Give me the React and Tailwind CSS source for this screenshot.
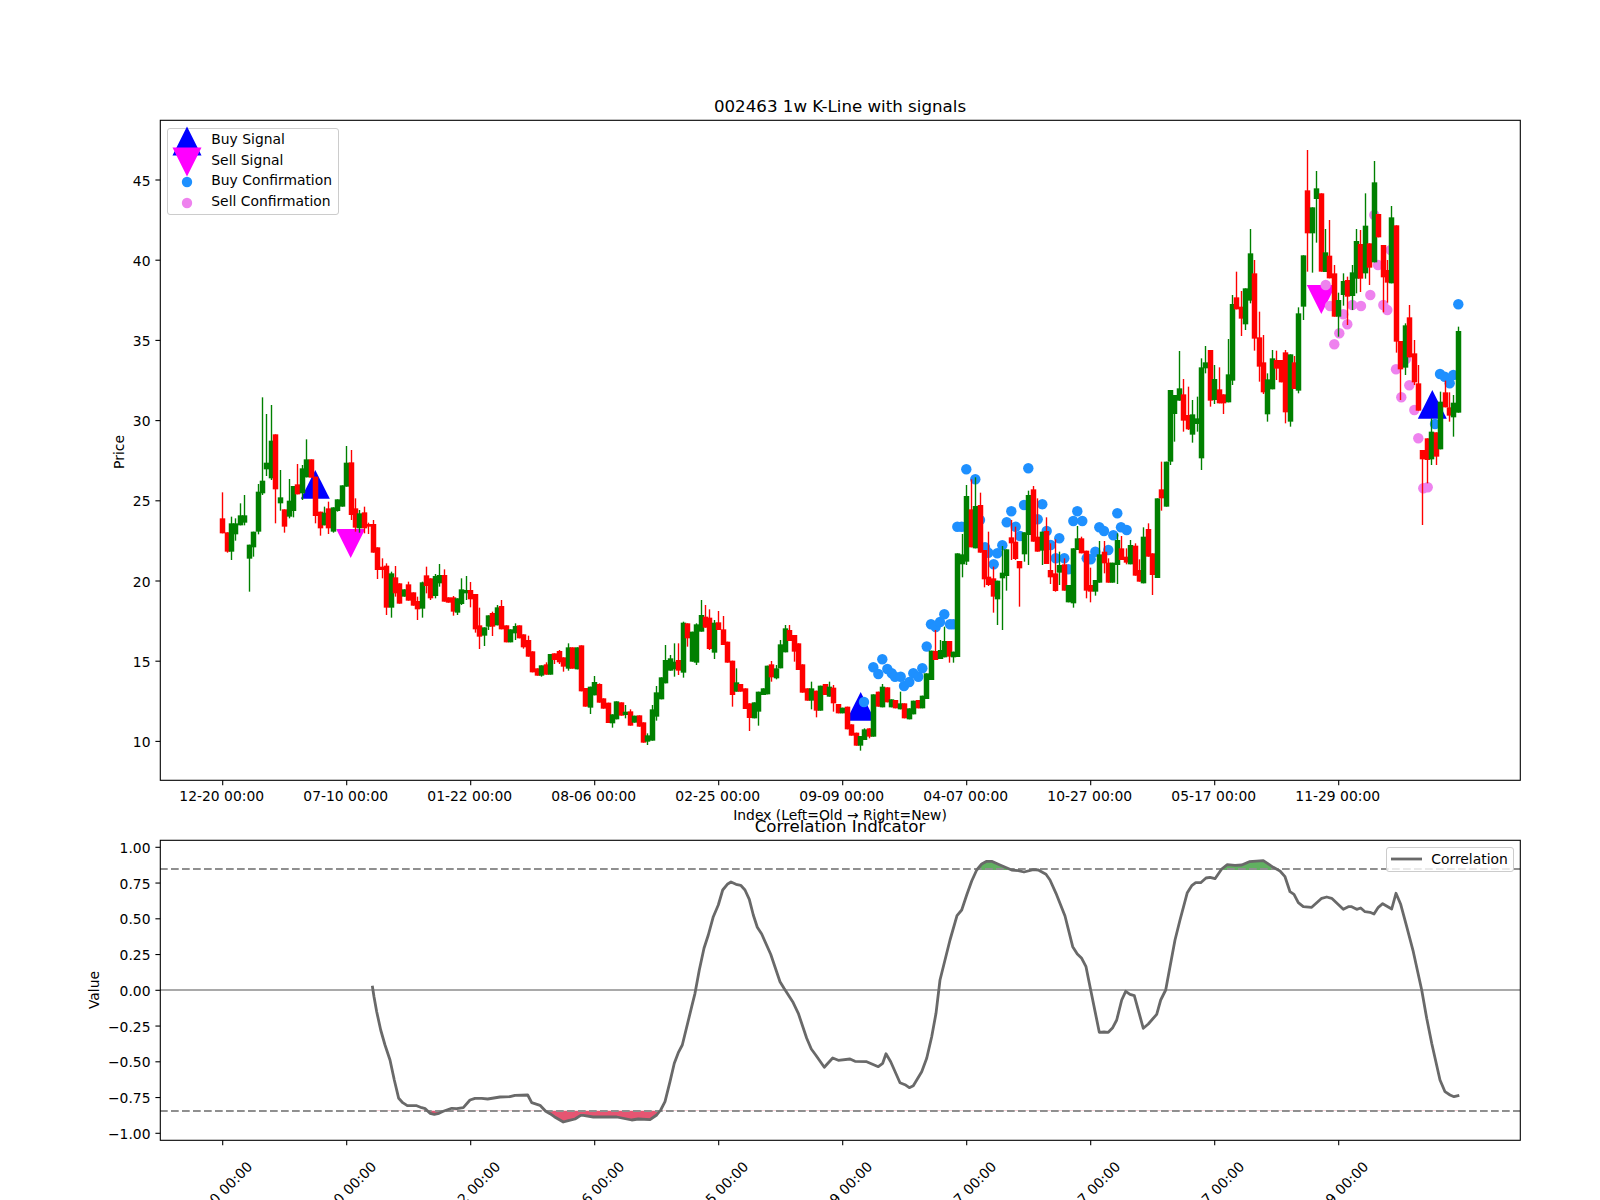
const X_LABELS = ['12-20 00:00', '07-10 00:00', '01-22 00:00', '08-06 00:00', '02-25 00:00', '09-09 00:00', '04-07 00:00', '10-27 00:00', '05-17 00:00', '11-29 00:00']
const tickX = (k) => 222.7 + 124 * k
const candleX = (i) => Math.round(222.2 + 4.429 * i) + 0.5

// [isRed, wickTop, bodyTop, bodyBottom, wickBottom], y in thirds of a pixel from base
const CANDLE_GROUPS = [
  {
    base: 380,
    rows: [
      [1,337,415,460,460],[1,457,457,515,518],[0,410,430,515,540],[0,415,430,463,482],[0,370,406,436,436],[0,345,406,428,436],[0,494,494,536,635],[0,455,455,502,530],
      [0,312,335,455,463],[0,52,302,340,345],[0,102,248,268,288],[0,75,182,295,300],[1,163,163,328,430],[0,270,352,370,392],[1,388,388,440,458],[0,297,362,410,415],
      [0,318,318,393,412],[1,252,313,343,343],[0,255,265,340,360],[0,178,238,292,292],[1,238,238,293,293],[1,290,290,408,430],[1,395,395,445,467],[0,380,398,436,436],
      [1,365,385,445,462],[0,382,382,455,458],[0,358,358,393,395],[0,316,316,380,380],[0,198,248,320,320],[1,210,247,405,420],[1,355,385,443,455],[0,390,400,445,458],
      [1,380,397,445,460],[1,428,432,440,462],[1,420,432,518,518],[1,502,502,570,597],[1,535,560,570,595],[1,550,557,683,705],[0,575,580,683,713],[1,558,592,640,650],
      [1,610,610,671,671],[0,628,628,650,650],[1,605,613,662,662],[1,637,637,677,677],[1,650,663,688,720],[0,605,607,686,713],[1,560,586,618,640],
    ],
  },
  {
    base: 570,
    rows: [
      [1,25,25,85,90],[0,12,18,78,85],[0,-18,15,40,50],[1,-2,15,95,95],[1,82,82,98,98],[1,78,82,125,137],[0,85,85,128,135],[0,25,58,102,105],[0,18,60,70,90],
      [1,36,60,88,112],[1,72,72,178,188],[1,113,166,200,237],[0,172,172,197,228],[0,136,136,170,180],[1,125,129,170,198],[0,105,112,166,166],[1,90,108,178,178],
      [1,166,166,217,217],[0,178,178,217,217],[0,160,168,190,210],[1,166,166,205,205],[1,193,193,232,236],[1,197,210,260,260],[1,244,244,307,307],[1,295,295,317,317],
      [0,286,286,317,320],[1,277,283,314,314],[0,252,252,314,314],[1,250,250,270,282],[1,240,243,277,282],[1,262,262,290,305],[0,220,232,296,302],[1,232,232,296,296],
      [0,232,232,298,298],[1,226,226,364,364],[1,354,354,410,410],[0,350,350,413,432],[0,318,336,376,376],[1,340,342,398,398],[1,385,385,416,416],[1,398,398,459,459],
      [0,433,433,460,473],[0,394,394,448,448],[1,397,397,437,437],[0,405,425,435,445],[1,418,424,467,467],[0,437,437,458,458],[1,436,436,470,470],[1,457,457,518,518],
      [0,490,496,515,525],[0,405,418,512,512],[0,348,367,440,452],[0,322,322,388,388],[0,225,270,340,340],
    ],
  },
  {
    base: 580,
    rows: [
      [0,225,235,272,272],[0,190,245,268,290],[1,190,240,272,285],[0,125,128,278,293],[1,130,130,175,200],[0,155,155,245,245],[0,130,133,248,255],[0,60,105,155,155],
      [1,75,110,143,143],[1,88,113,207,210],[0,120,128,218,237],[1,93,127,150,150],[1,108,148,195,195],[1,185,185,248,248],[1,242,242,345,380],[0,265,307,335,335],
      [1,312,312,335,335],[1,325,325,387,387],[1,370,370,414,453],[0,367,367,415,415],[0,335,335,395,437],[0,325,325,345,345],[0,257,257,343,343],[1,243,253,292,305],
      [0,255,265,295,298],[0,180,193,265,265],[0,135,145,217,217],[1,135,150,183,183],[1,165,165,215,245],[1,190,190,270,270],[1,253,253,338,338],[1,325,325,362,362],
      [0,305,325,362,388],[1,332,332,392,412],[0,317,317,392,392],[1,312,312,345,345],[0,305,320,350,350],[1,315,323,370,395],[1,372,372,400,400],[0,383,383,400,400],
      [1,380,380,448,448],[1,433,433,467,467],[1,458,458,497,497],[0,468,468,497,512],[0,445,448,480,480],[1,445,445,470,475],[0,343,343,470,470],[1,335,335,380,380],
      [0,312,320,382,382],[1,322,322,367,367],[0,358,358,382,382],[1,360,360,385,385],[0,335,370,388,388],[1,370,370,415,415],[0,385,385,418,418],[0,362,362,403,403],
      [1,360,360,385,385],[0,347,347,385,385],[0,280,280,357,357],[0,212,212,300,300],[1,150,213,240,240],[0,180,210,237,237],[0,140,183,232,232],[1,183,183,230,248],
      [0,215,215,232,248],
    ],
  },
  {
    base: 430,
    rows: [
      [0,370,370,681,681],[0,312,373,403,442],[0,165,198,395,405],[1,148,238,352,352],[0,142,228,355,355],[1,188,225,368,368],[1,360,360,448,472],[1,305,440,465,468],
      [1,410,445,500,548],[0,452,452,508,585],[0,348,428,445,600],[0,358,358,438,482],[1,270,322,340,390],[1,290,335,387,390],[1,393,393,415,530],[0,307,307,373,395],
      [0,182,195,315,405],[1,168,178,335,335],[1,205,320,365,365],[0,305,305,362,405],[1,262,303,402,402],[1,340,420,442,462],[1,328,430,483,485],[0,365,405,428,465],
      [1,385,403,482,482],[0,465,465,517,517],[0,355,355,520,533],[0,288,325,360,360],[1,320,325,370,370],[1,362,362,482,505],[1,413,465,485,517],[0,450,450,485,497],
      [0,333,373,458,458],[1,333,365,400,430],[1,385,398,458,458],[0,398,398,458,458],[0,310,330,405,462],[1,318,355,390,390],[1,355,380,398,403],[0,330,345,403,403],
      [1,340,347,437,437],[1,388,420,455,455],[0,292,320,460,460],[1,280,297,380,380],[1,370,370,435,495],
    ],
  },
  {
    base: 140,
    rows: [
      [0,1075,1075,1314,1314],[1,965,1048,1075,1112],[0,965,965,1100,1100],[0,750,750,965,975],[0,765,765,822,905],[0,633,745,782,782],[1,717,763,842,875],[1,740,825,868,870],
      [0,780,823,884,908],[0,770,835,852,875],[0,655,682,955,990],[0,618,667,685,700],[1,630,630,782,800],[0,675,717,780,792],[1,682,748,790,790],[1,763,763,790,822],
      [0,597,703,787,787],[0,465,492,722,735],[1,395,472,508,508],[1,453,500,536,588],[0,445,445,553,570],[0,267,340,482,490],[1,360,400,596,632],[1,515,592,680,725],
      [1,585,667,757,762],[0,700,718,823,845],[0,630,655,748,748],[1,632,660,686,720],[1,660,660,727,727],[1,630,637,817,850],[0,643,643,845,860],[1,648,667,747,747],
      [0,502,520,752,760],[0,346,346,500,540],[1,30,151,280,395],[0,202,202,280,398],[0,93,145,177,308],[1,160,160,395,395],[0,267,337,396,396],[1,240,347,415,415],
      [1,375,400,530,530],[0,458,480,530,590],[0,400,423,465,497],[1,410,420,470,555],[0,375,397,468,510],[0,267,303,416,460],[1,270,312,416,456],[0,160,257,400,416],
      [1,310,310,383,435],[0,63,127,367,367],[1,222,222,292,292],[1,315,315,412,517],[1,360,390,428,488],[0,198,232,430,430],[1,256,256,605,638],[1,603,603,688,780],
      [0,550,556,683,705],[1,495,532,652,652],[1,600,640,727,735],[1,675,730,812,812],[1,930,930,958,1155],[1,895,895,960,1030],[0,835,875,958,975],[1,877,877,950,975],
      [0,755,785,928,928],[1,722,757,802,802],[1,757,802,827,845],[0,765,788,832,890],[0,560,573,818,818],
    ],
  },
]

const CANDLES = CANDLE_GROUPS.flatMap(({ base, rows }) =>
  rows.map(([red, wt, bt, bb, wb]) => ({
    color: red ? '#ff0000' : '#008000',
    wickTop: base + wt / 3,
    bodyTop: base + bt / 3,
    bodyBottom: base + bb / 3,
    wickBottom: base + wb / 3,
  }))
)

const BUY_DOTS = [
  [864,702],[873.3,667.3],[878.3,674],[882.3,659.3],[887.3,669],[891.7,673.3],[895,676.7],[900.7,676.7],[904,686],[909.3,682],[913.3,673.3],[918.3,676.7],[922.3,668.3],
  [926.7,646.5],[931,624.3],[935.7,627],[940,622],[944.3,614.3],[950,624.2],[953.3,624.2],[957.3,526.7],[961.7,526.7],[966.3,469.3],[975.3,479.3],[980,520],[985,547.3],
  [988.3,552.7],[993.7,564.3],[997.3,553.3],[1002.3,545.3],[1006.7,522.3],[1011.3,511.3],[1015.7,526.7],[1020,536],[1024,505],[1028.3,468.3],[1037.7,519.3],[1042.3,504.3],
  [1046.7,531],[1050.7,545],[1055.7,558.3],[1059.3,538.3],[1064.3,558.3],[1068.3,569.3],[1073.3,521],[1077.3,511.3],[1082.3,521],[1086.7,558.3],[1090.7,559.3],[1095.3,551.7],
  [1099.3,527.3],[1104,531],[1108.3,550],[1113.3,535.3],[1117.3,513.3],[1121,527.3],[1126.7,530],[1435,424],[1440,374],[1444.7,376.7],[1449.7,383.3],[1453.3,375],[1458.3,304.3],
]

const SELL_DOTS = [
  [1325.7,285],[1330,306],[1334.3,344.3],[1339.3,333.3],[1343.3,314.3],[1347.3,324.3],[1352.3,305],[1361,306],[1370.3,295],[1374.3,215],[1378,265],[1383.3,305],[1387.3,310],
  [1390.7,250],[1396,369.3],[1401.3,397.3],[1406,359],[1409.3,385.3],[1414.3,410],[1418.3,438.3],[1423.3,488.3],[1427.7,487.3],
]

const BUY_MARKERS = [[315.3, 470], [860.7, 692], [1432.3, 390]]
const SELL_MARKERS = [[350.7, 558], [1321.3, 314]]

// correlation curve read from three crops: [originX, points in thirds of a pixel]
const CURVE_PARTS = [
  [150, [[667,647],[672,680],[680,725],[692,780],[705,825],[720,870],[733,930],[746,985],[758,998],[772,1007],[800,1007],[815,1013],[826,1016],[840,1030],[853,1033],[867,1030],[880,1024],[905,1015],[920,1016],[940,1013],[960,990],[975,985],[995,985],[1013,987],[1050,981],[1080,980],[1095,976],[1133,975],[1145,998],[1170,1006],[1187,1024],[1200,1031],[1213,1040],[1240,1056],[1255,1052],[1275,1047],[1292,1036],[1300,1036],[1330,1041],[1400,1041],[1445,1050],[1465,1047]]],
  [650, [[0,1049],[20,1035],[32,1020],[45,995],[60,935],[73,880],[85,848],[97,825],[125,710],[135,670],[148,600],[162,535],[175,495],[190,440],[205,405],[218,360],[232,343],[243,336],[258,343],[272,346],[285,360],[298,388],[310,435],[322,472],[335,492],[362,553],[390,635],[402,655],[428,695],[445,730],[470,805],[484,837],[497,855],[523,892],[548,864],[565,871],[600,867],[615,874],[650,875],[685,890],[698,880],[708,851],[722,875],[750,938],[765,944],[778,953],[790,947],[815,905],[830,865],[845,800],[858,730],[870,630],[885,570],[900,510],[921,437],[935,420],[950,375],[965,333],[980,300],[995,282],[1010,274],[1025,274],[1050,285],[1085,300],[1105,302],[1122,306],[1150,299],[1165,300],[1188,313],[1200,330],[1218,370],[1245,438],[1268,530],[1282,552],[1295,565],[1308,590],[1322,660],[1348,787],[1362,786],[1375,787],[1388,773],[1400,750],[1415,690],[1427,664],[1440,673],[1453,677]]],
  [1130, [[40,775],[55,762],[80,733],[92,690],[107,660],[120,590],[135,510],[150,450],[172,368],[185,347],[197,338],[212,338],[228,324],[240,322],[255,326],[275,297],[292,284],[315,286],[335,285],[358,275],[400,272],[430,292],[450,303],[465,320],[480,365],[492,373],[505,398],[520,410],[545,412],[575,385],[590,381],[605,385],[640,418],[655,410],[665,410],[680,418],[692,414],[705,425],[720,427],[732,432],[745,412],[758,401],[785,417],[798,370],[812,403],[830,470],[850,545],[875,660],[890,745],[905,820],[930,930],[945,965],[960,975],[972,980],[988,976]]],
]
const CURVE = CURVE_PARTS.flatMap(([x0, pts]) => pts.map(([x, y]) => `${(x0 + x / 3).toFixed(1)},${(770 + y / 3).toFixed(1)}`))
const CURVE_LINE = CURVE.join(' ')
const CURVE_END = CURVE_PARTS[2][1].at(-1)
const CURVE_START = CURVE_PARTS[0][1][0]
const startX = (150 + CURVE_START[0] / 3).toFixed(1)
const endX = (1130 + CURVE_END[0] / 3).toFixed(1)

const UP = 870
const LOW = 1110.5

const Spine = ({ top, height }) => (
  <rect x="160.3" y={top + 0.3} width="1360" height={height} fill="none" stroke="#000" strokeWidth="1.1" />
)

const XTicks = ({ y }) =>
  X_LABELS.map((_, k) => <line key={k} x1={tickX(k)} x2={tickX(k)} y1={y} y2={y + 4.9} stroke="#000" strokeWidth="1.1" />)

const YTick = ({ y, label }) => (
  <g>
    <line x1="155.4" x2="160.3" y1={y} y2={y} stroke="#000" strokeWidth="1.1" />
    <text x="150.5" y={y + 5.5} textAnchor="end" className="text-[13.89px]">{label}</text>
  </g>
)

const KLineChart = () => (
  <svg viewBox="160 120 1360 660" className="block h-[660px] w-[1360px] overflow-visible">
    {BUY_MARKERS.map(([x, y]) => (
      <polygon key={x} points={`${x},${y} ${x - 14.5},${y + 28.7} ${x + 14.5},${y + 28.7}`} fill="#0000ff" />
    ))}
    {SELL_MARKERS.map(([x, y]) => (
      <polygon key={x} points={`${x},${y} ${x - 14.5},${y - 29} ${x + 14.5},${y - 29}`} fill="#ff00ff" />
    ))}
    {BUY_DOTS.map(([x, y]) => <circle key={x} cx={x} cy={y} r="5.2" fill="#1e90ff" />)}
    {SELL_DOTS.map(([x, y]) => <circle key={x} cx={x} cy={y} r="5.2" fill="#ee82ee" />)}
    {CANDLES.map((c, i) => (
      <g key={i} stroke={c.color}>
        <line x1={candleX(i)} x2={candleX(i)} y1={c.wickTop} y2={c.wickBottom} strokeWidth="1.39" />
        <line x1={candleX(i)} x2={candleX(i)} y1={c.bodyTop} y2={c.bodyBottom} strokeWidth="5.5" />
      </g>
    ))}
    <Spine top={120} height={660} />
    <XTicks y={780.3} />
    {X_LABELS.map((label, k) => (
      <text key={label} x={tickX(k) - 1} y="801" textAnchor="middle" className="text-[13.89px]">{label}</text>
    ))}
    {[45, 40, 35, 30, 25, 20, 15, 10].map((v) => (
      <YTick key={v} y={180 + (45 - v) * 16.04} label={v} />
    ))}
    <text transform="translate(124 452) rotate(-90)" textAnchor="middle" className="text-[13.89px]">Price</text>
    <text x="840" y="820" textAnchor="middle" className="text-[13.89px]">Index (Left=Old → Right=New)</text>
  </svg>
)

const CorrelationChart = () => (
  <svg viewBox="160 840 1360 300" className="block h-[300px] w-[1360px] overflow-visible">
    <defs>
      <clipPath id="aboveUpper"><rect x="160" y="840" width="1360" height={UP - 840} /></clipPath>
      <clipPath id="belowLower"><rect x="160" y={LOW} width="1360" height={1140 - LOW} /></clipPath>
    </defs>
    <polygon points={`${startX},${UP} ${CURVE_LINE} ${endX},${UP}`} fill="#008000" fillOpacity="0.62" clipPath="url(#aboveUpper)" />
    <polygon points={`${startX},${LOW} ${CURVE_LINE} ${endX},${LOW}`} fill="#dc143c" fillOpacity="0.72" clipPath="url(#belowLower)" />
    <line x1="160" x2="1520" y1="869" y2="869" stroke="#8f8f8f" strokeWidth="2" strokeDasharray="7.7 3.3" />
    <line x1="160" x2="1520" y1="1111" y2="1111" stroke="#8f8f8f" strokeWidth="2" strokeDasharray="7.7 3.3" />
    <line x1="160" x2="1520" y1="990" y2="990" stroke="#a9a9a9" strokeWidth="2" />
    <polyline points={CURVE_LINE} fill="none" stroke="#696969" strokeWidth="2.8" strokeLinejoin="round" />
    <Spine top={840} height={300} />
    <XTicks y={1140.3} />
    {X_LABELS.map((label, k) => (
      <text key={label} transform={`translate(${tickX(k) - 3} 1194) rotate(-45)`} y="5" textAnchor="middle" className="text-[13.89px]">{label}</text>
    ))}
    {['1.00', '0.75', '0.50', '0.25', '0.00', '−0.25', '−0.50', '−0.75', '−1.00'].map((label, k) => (
      <YTick key={label} y={847.3 + k * 35.75} label={label} />
    ))}
    <text transform="translate(99 990) rotate(-90)" textAnchor="middle" className="text-[13.89px]">Value</text>
  </svg>
)

const LegendRow = ({ label, children }) => (
  <div className="relative flex h-[21px] items-center pl-[43px]">
    <svg viewBox="-15 -15 30 30" className="absolute left-[3.4px] top-[-2.5px] h-[30px] w-[30px] overflow-visible">
      {children}
    </svg>
    <span className="relative">{label}</span>
  </div>
)

const SignalLegend = () => (
  <div className="absolute left-[7.3px] top-[7.7px] flex h-[87.6px] w-[171.4px] flex-col justify-center rounded-[3px] border border-[#cccccc] bg-white/80 pb-[3px] text-[13.89px] leading-[16px]">
    <LegendRow label="Buy Signal"><polygon points="0,-14.5 -14.5,14.5 14.5,14.5" fill="#0000ff" /></LegendRow>
    <LegendRow label="Sell Signal"><polygon points="0,14.5 -14.5,-14.5 14.5,-14.5" fill="#ff00ff" /></LegendRow>
    <LegendRow label="Buy Confirmation"><circle r="5.2" fill="#1e90ff" /></LegendRow>
    <LegendRow label="Sell Confirmation"><circle r="5.2" fill="#ee82ee" /></LegendRow>
  </div>
)

const CorrelationLegend = () => (
  <div className="absolute left-[1226.3px] top-[7.3px] flex h-[25px] w-[127.4px] items-center gap-[9px] rounded-[3px] border border-[#cccccc] bg-white/80 pb-[2px] pl-[4px] text-[13.89px] leading-[16px]">
    <svg viewBox="0 0 31 4" className="h-[4px] w-[31px]">
      <line x1="0" x2="31" y1="2" y2="2" stroke="#696969" strokeWidth="2.8" />
    </svg>
    <span>Correlation</span>
  </div>
)

export default function App() {
  return (
    <div className="h-[1200px] w-[1600px] overflow-hidden bg-white pl-[160px] pt-[97px] font-['DejaVu_Sans',sans-serif] text-black">
      <h2 className="mb-[3px] w-[1360px] text-center text-[16.67px] font-normal leading-[20px]">002463 1w K-Line with signals</h2>
      <div className="relative w-[1360px]">
        <KLineChart />
        <SignalLegend />
      </div>
      <h2 className="relative mb-[3px] mt-[37px] w-[1360px] text-center text-[16.67px] font-normal leading-[20px]">Correlation Indicator</h2>
      <div className="relative w-[1360px]">
        <CorrelationChart />
        <CorrelationLegend />
      </div>
    </div>
  )
}
